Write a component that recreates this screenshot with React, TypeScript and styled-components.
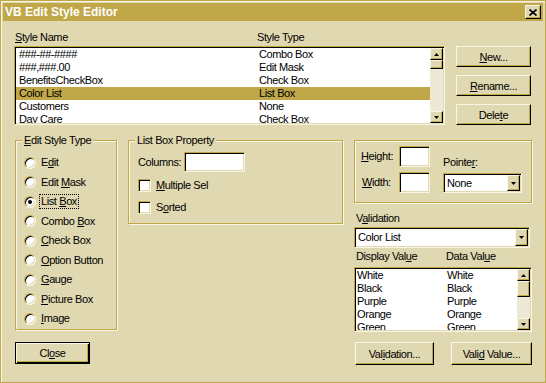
import React from 'react';
import styled, { createGlobalStyle, css } from 'styled-components';

const FACE = '#E0D8B0';
const GOLD = '#C0A848';
const LIGHT = '#FAF6E6';
const TRACK = '#EEE9D6';
const BLACK = '#000000';

const Global = createGlobalStyle`
  html, body { margin: 0; padding: 0; background: ${FACE}; }
  body {
    font-family: "Liberation Sans", Arial, sans-serif;
    font-size: 11px;
    letter-spacing: -0.4px;
    color: #000;
  }
  * { box-sizing: border-box; }
`;

const raised = css`
  background: ${FACE};
  border: 1px solid;
  border-color: ${LIGHT} ${BLACK} ${BLACK} ${LIGHT};
  box-shadow: inset -1px -1px 0 ${GOLD}, inset 1px 1px 0 ${FACE};
`;

const sunken = css`
  background: #fff;
  border: 1px solid;
  border-color: ${GOLD} ${LIGHT} ${LIGHT} ${GOLD};
  padding: 1px;
  box-shadow: inset 1px 1px 0 ${BLACK}, inset -1px -1px 0 ${FACE};
`;

const Window = styled.div`
  width: 546px;
  height: 383px;
  background: ${FACE};
  border: 1px solid ${GOLD};
  box-shadow: inset 1px 1px 0 ${LIGHT};
  padding: 2px;
  display: flex;
  flex-direction: column;
`;

const TitleBar = styled.div`
  height: 18px;
  background: ${GOLD};
  display: flex;
  align-items: center;
  justify-content: space-between;
  padding: 0 2px 0 2px;
`;

const TitleText = styled.span`
  color: #fff;
  font-weight: bold;
  font-size: 12px;
  letter-spacing: 0;
  line-height: 18px;
`;

const CloseBox = styled.div`
  ${raised};
  width: 16px;
  height: 14px;
  display: flex;
  align-items: center;
  justify-content: center;
`;

const Body = styled.div`
  flex: 1;
  padding: 10px 0 0 11px;
  display: flex;
  flex-direction: column;
`;

const TopSection = styled.div`
  display: flex;
  align-items: flex-start;
`;

const ListColumn = styled.div`
  width: 431px;
  display: flex;
  flex-direction: column;
`;

const HeaderRow = styled.div<{ $cols: string; $pad: number }>`
  height: 15px;
  line-height: 13px;
  display: grid;
  grid-template-columns: ${(p) => p.$cols};
  padding-left: ${(p) => p.$pad}px;
  white-space: nowrap;
`;

const ListBox = styled.div<{ $h: number }>`
  ${sunken};
  height: ${(p) => p.$h}px;
  display: flex;
  overflow: hidden;
`;

const Rows = styled.div`
  flex: 1;
  overflow: hidden;
`;

const Row = styled.div<{ $cols: string; $pad: number; $sel?: boolean }>`
  height: 13px;
  line-height: 13px;
  display: grid;
  grid-template-columns: ${(p) => p.$cols};
  padding-left: ${(p) => p.$pad}px;
  background: ${(p) => (p.$sel ? GOLD : 'transparent')};
  white-space: nowrap;
`;

const ScrollTrack = styled.div`
  width: 13px;
  background: ${TRACK};
  display: flex;
  flex-direction: column;
`;

const ScrollButton = styled.div`
  ${raised};
  height: 12px;
  flex: none;
  display: flex;
  align-items: center;
  justify-content: center;
`;

const Thumb = styled.div<{ $h: number }>`
  ${raised};
  height: ${(p) => p.$h}px;
  flex: none;
`;

const Spacer = styled.div`
  flex: 1;
`;

const ButtonColumn = styled.div`
  margin-left: 11px;
  padding-top: 15px;
  display: flex;
  flex-direction: column;
  gap: 8px;
`;

const Button = styled.button<{ $w: number; $h: number; $default?: boolean }>`
  ${raised};
  width: ${(p) => p.$w}px;
  height: ${(p) => p.$h}px;
  padding: 0;
  font: inherit;
  letter-spacing: inherit;
  color: #000;
  text-align: center;
  ${(p) =>
    p.$default &&
    css`
      border-color: ${BLACK};
      box-shadow: inset 1px 1px 0 ${LIGHT}, inset -1px -1px 0 ${BLACK}, inset -2px -2px 0 ${GOLD};
    `}
`;

const BottomSection = styled.div`
  margin-top: 15px;
  display: flex;
  align-items: flex-start;
`;

const LeftColumn = styled.div`
  margin-left: 1px;
  display: flex;
  flex-direction: column;
  gap: 12px;
`;

const GroupBox = styled.div<{ $w: number; $h: number; $ml?: number }>`
  width: ${(p) => p.$w}px;
  height: ${(p) => p.$h}px;
  margin-left: ${(p) => p.$ml ?? 0}px;
  border: 1px solid ${GOLD};
  box-shadow: 1px 1px 0 ${LIGHT}, inset 1px 1px 0 ${LIGHT};
  display: flex;
  flex-direction: column;
`;

const Caption = styled.div`
  width: fit-content;
  margin: -7px 0 0 6px;
  padding: 0 2px;
  line-height: 13px;
  background: ${FACE};
  white-space: nowrap;
`;

const RadioList = styled.div`
  margin-top: 6px;
  padding-left: 8px;
  display: flex;
  flex-direction: column;
`;

const RadioRow = styled.div`
  height: 19.5px;
  display: flex;
  align-items: center;
  gap: 3px;
`;

const RadioDot = styled.span<{ $on?: boolean }>`
  width: 12px;
  height: 12px;
  border-radius: 50%;
  background: #fff;
  border: 1px solid;
  border-color: ${GOLD} ${LIGHT} ${LIGHT} ${GOLD};
  box-shadow: inset 1px 1px 0 ${BLACK}, inset -1px -1px 0 ${FACE};
  display: flex;
  align-items: center;
  justify-content: center;
  &::after {
    content: '';
    width: 4px;
    height: 4px;
    border-radius: 50%;
    background: #000;
    display: ${(p) => (p.$on ? 'block' : 'none')};
  }
`;

const OptLabel = styled.span<{ $focus?: boolean }>`
  padding: 0 1px;
  line-height: 13px;
  border: 1px dotted ${(p) => (p.$focus ? BLACK : 'transparent')};
  white-space: nowrap;
`;

const PropBody = styled.div`
  margin-top: 5px;
  padding-left: 9px;
  display: flex;
  flex-direction: column;
`;

const FieldRow = styled.div`
  display: flex;
  align-items: center;
  line-height: 13px;
`;

const FieldLabel = styled.span<{ $w: number; $pad?: number }>`
  width: ${(p) => p.$w}px;
  padding-left: ${(p) => p.$pad ?? 0}px;
  white-space: nowrap;
`;

const Field = styled.div<{ $w: number; $h: number }>`
  ${sunken};
  width: ${(p) => p.$w}px;
  height: ${(p) => p.$h}px;
  display: flex;
  align-items: stretch;
`;

const FieldText = styled.span`
  flex: 1;
  padding-left: 2px;
  line-height: 16px;
  background: #fff;
`;

const DropButton = styled.div`
  ${raised};
  width: 13px;
  flex: none;
  display: flex;
  align-items: center;
  justify-content: center;
`;

const CheckList = styled.div`
  margin-top: 5px;
  display: flex;
  flex-direction: column;
  gap: 6px;
`;

const CheckRow = styled.div`
  height: 16px;
  display: flex;
  align-items: center;
  gap: 5px;
`;

const CheckBox = styled.span`
  ${sunken};
  width: 13px;
  height: 13px;
`;

const RightColumn = styled.div`
  margin-left: 11px;
  width: 178px;
  display: flex;
  flex-direction: column;
`;

const SizeGroupBody = styled.div`
  padding: 5px 0 0 6px;
  display: flex;
`;

const SizeFields = styled.div`
  display: flex;
  flex-direction: column;
  gap: 5px;
`;

const PointerBox = styled.div`
  margin-left: 13px;
  display: flex;
  flex-direction: column;
  justify-content: flex-end;
`;

const StackLabel = styled.div<{ $mt: number; $mb: number; $pad?: number }>`
  line-height: 13px;
  margin-top: ${(p) => p.$mt}px;
  margin-bottom: ${(p) => p.$mb}px;
  padding-left: ${(p) => p.$pad ?? 0}px;
  white-space: nowrap;
`;

const ValueHeader = styled(HeaderRow)`
  margin-top: 2px;
  height: 17px;
`;

const ActionRow = styled.div`
  margin-top: 10px;
  display: flex;
  justify-content: space-between;
  padding-left: 1px;
`;

const UpArrow = () => (
  <svg width="5" height="3" viewBox="0 0 5 3">
    <polygon points="2.5,0 5,3 0,3" fill="#000" />
  </svg>
);

const DownArrow = () => (
  <svg width="5" height="3" viewBox="0 0 5 3">
    <polygon points="0,0 5,0 2.5,3" fill="#000" />
  </svg>
);

const ScrollBar = ({ thumb }: { thumb: number }) => (
  <ScrollTrack>
    <ScrollButton>
      <UpArrow />
    </ScrollButton>
    <Thumb $h={thumb} />
    <Spacer />
    <ScrollButton>
      <DownArrow />
    </ScrollButton>
  </ScrollTrack>
);

const styles: [string, string][] = [
  ['###-##-####', 'Combo Box'],
  ['###,###.00', 'Edit Mask'],
  ['BenefitsCheckBox', 'Check Box'],
  ['Color List', 'List Box'],
  ['Customers', 'None'],
  ['Day Care', 'Check Box'],
];

const colors = ['White', 'Black', 'Purple', 'Orange', 'Green'];

const radios: { pre: string; key: string; post: string; on?: boolean }[] = [
  { pre: 'E', key: 'd', post: 'it' },
  { pre: 'Edit ', key: 'M', post: 'ask' },
  { pre: 'List ', key: 'B', post: 'ox', on: true },
  { pre: 'Combo ', key: 'B', post: 'ox' },
  { pre: '', key: 'C', post: 'heck Box' },
  { pre: '', key: 'O', post: 'ption Button' },
  { pre: '', key: 'G', post: 'auge' },
  { pre: '', key: 'P', post: 'icture Box' },
  { pre: '', key: 'I', post: 'mage' },
];

export default function App() {
  return (
    <>
      <Global />
      <Window>
        <TitleBar>
          <TitleText>VB Edit Style Editor</TitleText>
          <CloseBox>
            <svg width="8" height="7" viewBox="0 0 8 7">
              <path d="M0.5 0.5 L7.5 6.5 M7.5 0.5 L0.5 6.5" stroke="#000" strokeWidth="1.6" />
            </svg>
          </CloseBox>
        </TitleBar>
        <Body>
          <TopSection>
            <ListColumn>
              <HeaderRow $cols="242px 1fr" $pad={1}>
                <span>
                  <u>S</u>tyle Name
                </span>
                <span>Style Type</span>
              </HeaderRow>
              <ListBox $h={79}>
                <Rows>
                  {styles.map(([n, t], i) => (
                    <Row key={n} $cols="240px 1fr" $pad={3} $sel={i === 3}>
                      <span>{n}</span>
                      <span>{t}</span>
                    </Row>
                  ))}
                </Rows>
                <ScrollBar thumb={9} />
              </ListBox>
            </ListColumn>
            <ButtonColumn>
              <Button $w={75} $h={21}>
                <u>N</u>ew...
              </Button>
              <Button $w={75} $h={21}>
                <u>R</u>ename...
              </Button>
              <Button $w={75} $h={21}>
                Dele<u>t</u>e
              </Button>
            </ButtonColumn>
          </TopSection>

          <BottomSection>
            <LeftColumn>
              <GroupBox $w={102} $h={190}>
                <Caption>
                  <u>E</u>dit Style Type
                </Caption>
                <RadioList>
                  {radios.map((r, i) => (
                    <RadioRow key={i}>
                      <RadioDot $on={r.on} />
                      <OptLabel $focus={r.on}>
                        {r.pre}
                        <u>{r.key}</u>
                        {r.post}
                      </OptLabel>
                    </RadioRow>
                  ))}
                </RadioList>
              </GroupBox>
              <Button $w={75} $h={22} $default>
                Cl<u>o</u>se
              </Button>
            </LeftColumn>

            <GroupBox $w={215} $h={84} $ml={11}>
              <Caption>List Box Property</Caption>
              <PropBody>
                <FieldRow>
                  <FieldLabel $w={46}>Columns:</FieldLabel>
                  <Field $w={61} $h={20} />
                </FieldRow>
                <CheckList>
                  <CheckRow>
                    <CheckBox />
                    <span>
                      <u>M</u>ultiple Sel
                    </span>
                  </CheckRow>
                  <CheckRow>
                    <CheckBox />
                    <span>
                      S<u>o</u>rted
                    </span>
                  </CheckRow>
                </CheckList>
              </PropBody>
            </GroupBox>

            <RightColumn>
              <GroupBox $w={178} $h={63}>
                <SizeGroupBody>
                  <SizeFields>
                    <FieldRow>
                      <FieldLabel $w={38}>
                        <u>H</u>eight:
                      </FieldLabel>
                      <Field $w={31} $h={21} />
                    </FieldRow>
                    <FieldRow>
                      <FieldLabel $w={38} $pad={1}>
                        <u>W</u>idth:
                      </FieldLabel>
                      <Field $w={31} $h={21} />
                    </FieldRow>
                  </SizeFields>
                  <PointerBox>
                    <StackLabel $mt={0} $mb={4}>
                      Pointe<u>r</u>:
                    </StackLabel>
                    <Field $w={79} $h={20}>
                      <FieldText>None</FieldText>
                      <DropButton>
                        <DownArrow />
                      </DropButton>
                    </Field>
                  </PointerBox>
                </SizeGroupBody>
              </GroupBox>

              <StackLabel $mt={9} $mb={2} $pad={2}>
                V<u>a</u>lidation
              </StackLabel>
              <Field $w={176} $h={21}>
                <FieldText>Color List</FieldText>
                <DropButton>
                  <DownArrow />
                </DropButton>
              </Field>

              <ValueHeader $cols="90px 1fr" $pad={2}>
                <span>
                  Display Val<u>u</u>e
                </span>
                <span>
                  Data Val<u>u</u>e
                </span>
              </ValueHeader>
              <ListBox $h={65}>
                <Rows>
                  {colors.map((c) => (
                    <Row key={c} $cols="90px 1fr" $pad={1}>
                      <span>{c}</span>
                      <span>{c}</span>
                    </Row>
                  ))}
                </Rows>
                <ScrollBar thumb={16} />
              </ListBox>

              <ActionRow>
                <Button $w={79} $h={23}>
                  Val<u>i</u>dation...
                </Button>
                <Button $w={81} $h={23}>
                  Vali<u>d</u> Value...
                </Button>
              </ActionRow>
            </RightColumn>
          </BottomSection>
        </Body>
      </Window>
    </>
  );
}
